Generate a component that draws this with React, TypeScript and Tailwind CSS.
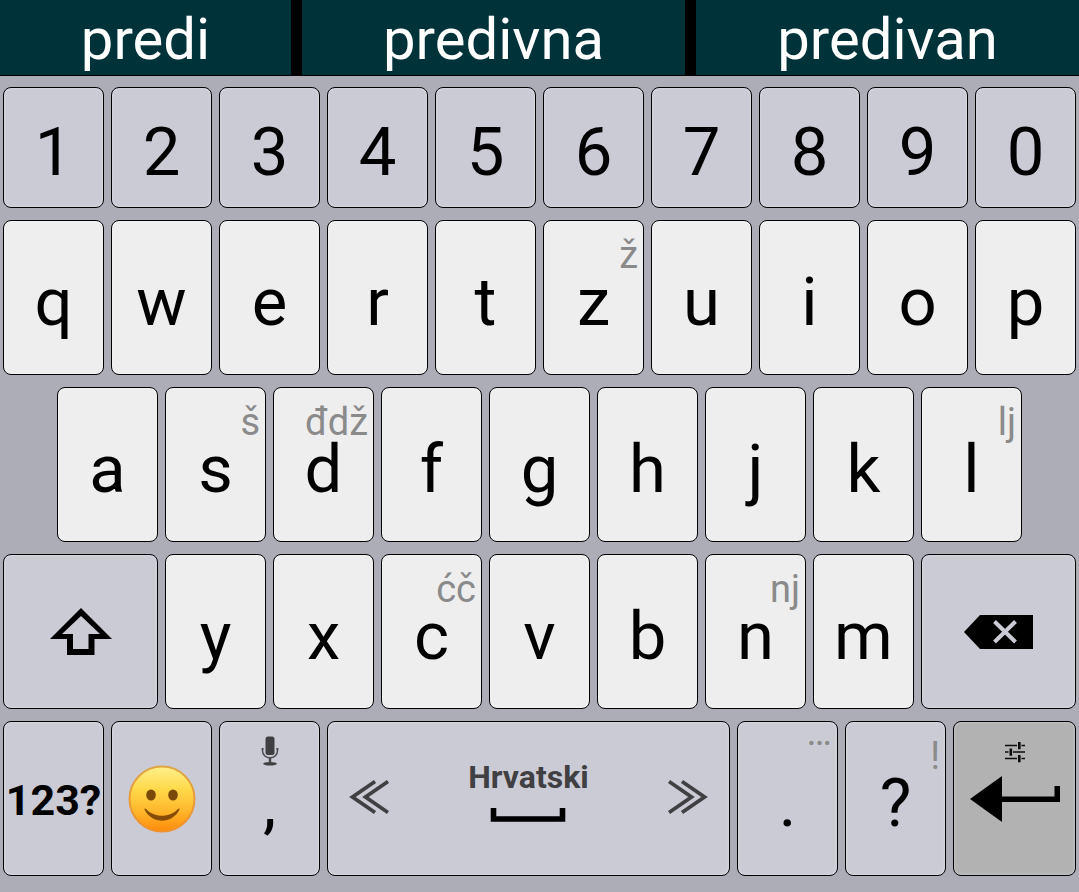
import type { ReactNode } from "react";

type KeyTone = "letter" | "function" | "action";

const tones: Record<KeyTone, string> = {
  letter: "bg-[#eeeeef]",
  function: "bg-[#cbcbd5]",
  action: "bg-[#b2b2b2]",
};

interface KeyProps {
  label: string;
  tone?: KeyTone;
  span?: string;
  children: ReactNode;
}

function Key({ label, tone = "function", span = "", children }: KeyProps) {
  return (
    <button
      type="button"
      aria-label={label}
      className={`relative flex h-full min-w-0 items-center justify-center rounded-lg border border-black shadow-[inset_0_0_3px_rgba(255,255,255,0.45)] ${tones[tone]} ${span}`}
    >
      {children}
    </button>
  );
}

function Glyph({ children }: { children: ReactNode }) {
  return <span className="pt-2 text-[67px] leading-[76px]">{children}</span>;
}

function Hint({ children, raised = false }: { children: ReactNode; raised?: boolean }) {
  return (
    <span
      className={`absolute right-[5px] text-[38px] leading-[40px] text-[#8a8a8b] ${raised ? "-top-[10px]" : "top-[14px]"}`}
    >
      {children}
    </span>
  );
}

const hints: Record<string, string> = {
  z: "ž",
  s: "š",
  d: "đdž",
  l: "lj",
  c: "ćč",
  n: "nj",
};

function CharKeys({ chars, tone }: { chars: string; tone: KeyTone }) {
  return (
    <>
      {chars.split("").map((c) => (
        <Key key={c} label={c} tone={tone} span="col-span-2">
          {hints[c] && <Hint>{hints[c]}</Hint>}
          <Glyph>{c}</Glyph>
        </Key>
      ))}
    </>
  );
}

function ShiftIcon() {
  return (
    <svg width="62" height="47" viewBox="0 0 62 47" aria-hidden="true">
      <path
        fillRule="evenodd"
        d="M31 0 62 31H44.5V47H17V31H0ZM31 8 12 26H23V41H38.5V26H50Z"
      />
    </svg>
  );
}

function BackspaceIcon() {
  return (
    <svg width="69" height="34" viewBox="0 0 69 34" aria-hidden="true">
      <path d="M0 17 16 0H69V34H16Z" />
      <path d="M30.5 6.500 51.500 27M51.500 6.500 30.500 27" stroke="#cbcbd5" strokeWidth="4" />
    </svg>
  );
}

function SmileIcon() {
  return (
    <svg width="68" height="68" viewBox="0 0 68 68" aria-hidden="true">
      <defs>
        <linearGradient id="face" x1="0" y1="0" x2="0" y2="1">
          <stop offset="0" stopColor="#fff08a" />
          <stop offset="0.35" stopColor="#ffd94a" />
          <stop offset="0.7" stopColor="#ffb52a" />
          <stop offset="1" stopColor="#fe8a0a" />
        </linearGradient>
        <linearGradient id="rim" x1="0" y1="0" x2="0" y2="1">
          <stop offset="0" stopColor="#dfa544" />
          <stop offset="1" stopColor="#f0912a" />
        </linearGradient>
      </defs>
      <circle cx="34" cy="34" r="32.5" fill="url(#face)" stroke="url(#rim)" strokeWidth="2" />
      <ellipse cx="23" cy="30" rx="4.8" ry="5.6" fill="#7a4808" />
      <ellipse cx="45" cy="30" rx="4.8" ry="5.6" fill="#7a4808" />
      <path
        d="M16.500 44.500C16 43.500 17.200 43 18 44C26 53 42 53 50 44C50.800 43 52 43.500 51.500 44.500C44 59.500 24 59.500 16.500 44.500Z"
        fill="#874d06"
      />
    </svg>
  );
}

function MicIcon() {
  return (
    <svg width="18" height="30" viewBox="0 0 18 30" aria-hidden="true">
      <rect x="4.500" y="0.500" width="9" height="18.500" rx="2.500" fill="#3f3f42" />
      <path d="M1.500 12V14.500C1.500 24.300 16.500 24.300 16.500 14.500V12" fill="none" stroke="#4b4b4e" strokeWidth="1.500" />
      <path d="M0.500 13H3M15 13H17.500" stroke="#4b4b4e" strokeWidth="1.200" />
      <path d="M9 21V27" stroke="#4b4b4e" strokeWidth="2.500" />
      <ellipse cx="9" cy="27.800" rx="6.800" ry="1.800" fill="#3f3f42" />
    </svg>
  );
}

function ChevronsIcon({ direction }: { direction: "left" | "right" }) {
  return (
    <svg
      width="40"
      height="36"
      viewBox="0 0 40 36"
      aria-hidden="true"
      fill="none"
      stroke="#404042"
      strokeWidth="3.800"
    >
      {direction === "left" ? (
        <path d="M26 2.500 3.500 18 26 33.500M39 2.500 16.500 18 39 33.500" />
      ) : (
        <path d="M14 2.500 36.500 18 14 33.500M1 2.500 23.500 18 1 33.500" />
      )}
    </svg>
  );
}

function SpaceIcon() {
  return (
    <svg width="76" height="16" viewBox="0 0 76 16" aria-hidden="true">
      <path d="M3.500 1V12H72.500V1" fill="none" stroke="#000" strokeWidth="5.600" />
    </svg>
  );
}

function TuneIcon() {
  return (
    <svg width="20" height="22" viewBox="0 0 20 22" aria-hidden="true" stroke="#0c0c0c">
      <path d="M0 4.500H12M16.500 4.500H20M0 11H3.500M8 11H20M0 17.500H12M16.500 17.500H20" strokeWidth="1.600" />
      <path d="M14.300 1V8.300M5.800 7.500V14.800M14.300 14V21.300" strokeWidth="2.600" />
    </svg>
  );
}

function EnterIcon() {
  return (
    <svg width="90" height="46" viewBox="0 0 90 46" aria-hidden="true">
      <path d="M0 23 32 0V20.500H84.500V10H90V26H32V46Z" />
    </svg>
  );
}

const suggestions = [
  { word: "predi", size: "grow-[291]" },
  { word: "predivna", size: "grow-[383]" },
  { word: "predivan", size: "grow-[383]" },
];

const rowClass = "grid grid-cols-20 gap-[7px]";

export default function App() {
  return (
    <main className="flex min-h-screen flex-col bg-[#adadb8] font-['Roboto',sans-serif] text-black">
      <div className="flex h-[76px] gap-[11px] border-b border-black bg-black">
        {suggestions.map(({ word, size }) => (
          <button
            key={word}
            type="button"
            className={`flex basis-0 items-center justify-center bg-[#00323a] pt-[2px] text-[58px] leading-[68px] text-white ${size}`}
          >
            {word}
          </button>
        ))}
      </div>

      <div className="flex flex-col gap-3 px-[3px] pt-[11px] pb-4">
        <div className={`${rowClass} h-[121px]`}>
          <CharKeys chars="1234567890" tone="function" />
        </div>

        <div className={`${rowClass} h-[155px]`}>
          <CharKeys chars="qwertzuiop" tone="letter" />
        </div>

        <div className={`${rowClass} h-[155px]`}>
          <span />
          <CharKeys chars="asdfghjkl" tone="letter" />
        </div>

        <div className={`${rowClass} h-[155px]`}>
          <Key label="Shift" span="col-span-3">
            <ShiftIcon />
          </Key>
          <CharKeys chars="yxcvbnm" tone="letter" />
          <Key label="Backspace" span="col-span-3">
            <BackspaceIcon />
          </Key>
        </div>

        <div className="grid h-[155px] grid-cols-[101fr_101fr_101fr_403fr_101fr_101fr_123fr] gap-[7px]">
          <Key label="123?">
            <span className="pt-[2px] text-[43px] leading-[50px] font-bold">123?</span>
          </Key>
          <Key label="Emoji">
            <SmileIcon />
          </Key>
          <Key label=",">
            <span className="absolute inset-x-0 top-[14px] flex justify-center">
              <MicIcon />
            </span>
            <Glyph>,</Glyph>
          </Key>
          <Key label="Hrvatski">
            <span className="flex w-full items-center justify-between px-[21px] pb-1">
              <ChevronsIcon direction="left" />
              <span className="flex flex-col items-center gap-[10px] pb-[14px] text-[32px] leading-[40px] font-bold text-[#404042]">
                Hrvatski
                <SpaceIcon />
              </span>
              <ChevronsIcon direction="right" />
            </span>
          </Key>
          <Key label=".">
            <Hint raised>…</Hint>
            <Glyph>.</Glyph>
          </Key>
          <Key label="?">
            <Hint>!</Hint>
            <Glyph>?</Glyph>
          </Key>
          <Key label="Enter" tone="action">
            <span className="absolute inset-x-0 top-[19px] flex justify-center">
              <TuneIcon />
            </span>
            <EnterIcon />
          </Key>
        </div>
      </div>
    </main>
  );
}
